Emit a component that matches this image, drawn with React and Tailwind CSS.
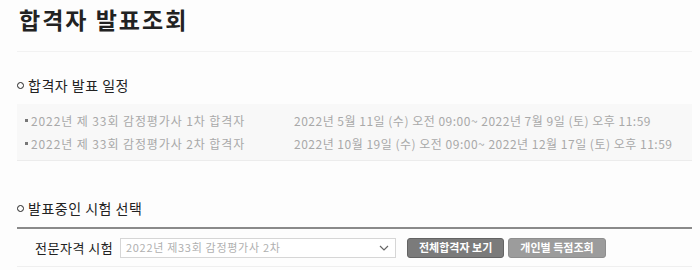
import React from "react";

const schedules = [
  {
    name: "2022년 제 33회 감정평가사 1차 합격자",
    period: "2022년 5월 11일 (수) 오전 09:00~ 2022년 7월 9일 (토) 오후 11:59",
  },
  {
    name: "2022년 제 33회 감정평가사 2차 합격자",
    period: "2022년 10월 19일 (수) 오전 09:00~ 2022년 12월 17일 (토) 오후 11:59",
  },
];

const Bullet = () => (
  <span className="inline-block w-[7px] h-[7px] rounded-full border-[1.5px] border-[#222] mr-[4px]"></span>
);

const App = () => {
  return (
    <div
      className="w-[700px] h-[270px] bg-[#fdfdfd] overflow-hidden text-[#222]"
      style={{ fontFamily: '"Noto Sans CJK KR", "Noto Sans", sans-serif' }}
    >
      <div className="px-[17px] pr-[8px]">
        {/* title */}
        <div className="h-[52px] pt-[3px] pl-[2px] border-b border-[#f2f2f2]">
          <h1 className="text-[23px] font-bold leading-[32px] tracking-[2px]">합격자 발표조회</h1>
        </div>

        {/* schedule */}
        <div className="mt-[24px] flex items-center text-[14px] leading-[18px] tracking-[0.5px]">
          <Bullet />
          합격자 발표 일정
        </div>
        <div className="mt-[10px] bg-[#f8f8f8] border-b border-[#ececec] py-[5px] pl-[8px] text-[12px] text-[#a9a9a9] tracking-[0.5px]">
          {schedules.map((s) => (
            <div key={s.name} className="flex h-[23px] items-center">
              <span className="w-[269px] flex items-center tracking-[0.9px]">
                <span className="inline-block w-[3px] h-[3px] bg-[#777] mr-[3px]"></span>
                {s.name}
              </span>
              <span>{s.period}</span>
            </div>
          ))}
        </div>

        {/* select */}
        <div className="mt-[38px] flex items-center text-[14px] leading-[18px] tracking-[0.5px]">
          <Bullet />
          발표중인 시험 선택
        </div>
        <div className="mt-[10px] border-t-2 border-[#8a8a8a] border-b border-b-[#efefef] h-[40px] flex items-center pl-[18px]">
          <span className="text-[13px] w-[85px] tracking-[0.5px]">전문자격 시험</span>
          <div className="w-[276px] h-[20px] border border-[#d6d6d6] bg-white flex items-center justify-between px-[5px] text-[11px] text-[#b0b0b0]">
            <span className="tracking-[0.7px]">2022년 제33회 감정평가사 2차</span>
            <svg width="10" height="6" viewBox="0 0 10 6" className="mr-[1px]">
              <path d="M1 1 L5 5 L9 1" fill="none" stroke="#666" strokeWidth="1.2" />
            </svg>
          </div>
          <button className="ml-[11px] h-[20px] px-[11px] rounded-[3px] bg-[#7b7b7b] border border-[#636363] text-white text-[11px] font-bold">
            전체합격자 보기
          </button>
          <button className="ml-[4px] h-[20px] px-[11px] rounded-[3px] bg-[#9c9c9c] border border-[#8e8e8e] text-white text-[11px] font-bold">
            개인별 득점조회
          </button>
        </div>
      </div>
    </div>
  );
};

export default App;
